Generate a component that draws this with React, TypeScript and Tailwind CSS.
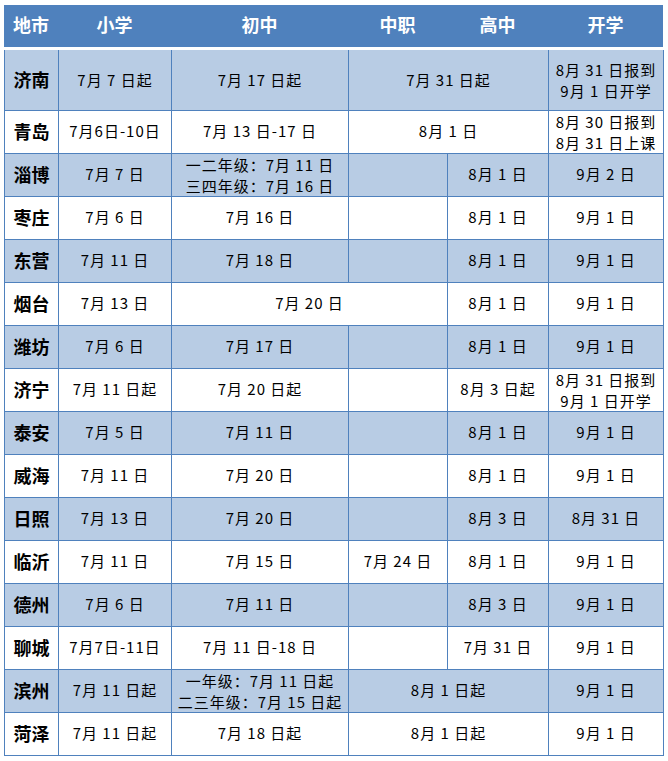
import React from 'react';

type Cell = { t?: string | string[]; span?: number };
type Row = { city: string; cells: Cell[]; tall?: boolean };

const rows: Row[] = [
  { city: '济南', tall: true, cells: [{ t: '7月 7 日起' }, { t: '7月 17 日起' }, { t: '7月 31 日起', span: 2 }, { t: ['8月 31 日报到', '9月 1 日开学'] }] },
  { city: '青岛', cells: [{ t: '7月6日-10日' }, { t: '7月 13 日-17 日' }, { t: '8月 1 日', span: 2 }, { t: ['8月 30 日报到', '8月 31 日上课'] }] },
  { city: '淄博', cells: [{ t: '7月 7 日' }, { t: ['一二年级：7月 11 日', '三四年级：7月 16 日'] }, {}, { t: '8月 1 日' }, { t: '9月 2 日' }] },
  { city: '枣庄', cells: [{ t: '7月 6 日' }, { t: '7月 16 日' }, {}, { t: '8月 1 日' }, { t: '9月 1 日' }] },
  { city: '东营', cells: [{ t: '7月 11 日' }, { t: '7月 18 日' }, {}, { t: '8月 1 日' }, { t: '9月 1 日' }] },
  { city: '烟台', cells: [{ t: '7月 13 日' }, { t: '7月 20 日', span: 2 }, { t: '8月 1 日' }, { t: '9月 1 日' }] },
  { city: '潍坊', cells: [{ t: '7月 6 日' }, { t: '7月 17 日' }, {}, { t: '8月 1 日' }, { t: '9月 1 日' }] },
  { city: '济宁', cells: [{ t: '7月 11 日起' }, { t: '7月 20 日起' }, {}, { t: '8月 3 日起' }, { t: ['8月 31 日报到', '9月 1 日开学'] }] },
  { city: '泰安', cells: [{ t: '7月 5 日' }, { t: '7月 11 日' }, {}, { t: '8月 1 日' }, { t: '9月 1 日' }] },
  { city: '威海', cells: [{ t: '7月 11 日' }, { t: '7月 20 日' }, {}, { t: '8月 1 日' }, { t: '9月 1 日' }] },
  { city: '日照', cells: [{ t: '7月 13 日' }, { t: '7月 20 日' }, {}, { t: '8月 3 日' }, { t: '8月 31 日' }] },
  { city: '临沂', cells: [{ t: '7月 11 日' }, { t: '7月 15 日' }, { t: '7月 24 日' }, { t: '8月 1 日' }, { t: '9月 1 日' }] },
  { city: '德州', cells: [{ t: '7月 6 日' }, { t: '7月 11 日' }, {}, { t: '8月 3 日' }, { t: '9月 1 日' }] },
  { city: '聊城', cells: [{ t: '7月7日-11日' }, { t: '7月 11 日-18 日' }, {}, { t: '7月 31 日' }, { t: '9月 1 日' }] },
  { city: '滨州', cells: [{ t: '7月 11 日起' }, { t: ['一年级：7月 11 日起', '二三年级：7月 15 日起'] }, { t: '8月 1 日起', span: 2 }, { t: '9月 1 日' }] },
  { city: '菏泽', cells: [{ t: '7月 11 日起' }, { t: '7月 18 日起' }, { t: '8月 1 日起', span: 2 }, { t: '9月 1 日' }] },
];

const headers = ['地市', '小学', '初中', '中职', '高中', '开学'];

function CellText({ t }: { t?: string | string[] }) {
  if (!t) return null;
  if (Array.isArray(t)) {
    return (
      <div className="flex flex-col items-center leading-[21px] whitespace-nowrap">
        {t.map((line) => (
          <span key={line}>{line}</span>
        ))}
      </div>
    );
  }
  return <span className="whitespace-nowrap">{t}</span>;
}

export default function App() {
  return (
    <div className="min-h-screen bg-white pl-[4px] pt-[5px] font-['Noto_Sans_CJK_SC',sans-serif] text-black">
      {/* Header */}
      <div className="grid h-[42px] w-[659px] grid-cols-[54px_113px_177px_99px_101px_115px] items-center bg-[#4f81bd] pb-[3px] text-[18px] font-bold text-white">
        {headers.map((h) => (
          <div key={h} className="text-center">
            {h}
          </div>
        ))}
      </div>

      {/* Body */}
      <table className="mt-[3px] w-[659px] table-fixed border-collapse text-[15px] tracking-[1px]">
        <colgroup>
          <col className="w-[54px]" />
          <col className="w-[113px]" />
          <col className="w-[177px]" />
          <col className="w-[99px]" />
          <col className="w-[101px]" />
          <col className="w-[115px]" />
        </colgroup>
        <tbody>
          {rows.map((row, i) => (
            <tr
              key={row.city}
              className={`${row.tall ? 'h-[60px]' : 'h-[43px]'} ${i % 2 === 0 ? 'bg-[#b8cce4]' : 'bg-white'}`}
            >
              <td className="border border-t-0 border-[#4f81bd] p-0 text-center align-middle text-[18px] font-bold tracking-normal">
                {row.city}
              </td>
              {row.cells.map((c, j) => (
                <td
                  key={j}
                  colSpan={c.span ?? 1}
                  className="border border-t-0 border-[#4f81bd] p-0 text-center align-middle"
                >
                  <div className="flex justify-center">
                    <CellText t={c.t} />
                  </div>
                </td>
              ))}
            </tr>
          ))}
        </tbody>
      </table>
    </div>
  );
}
